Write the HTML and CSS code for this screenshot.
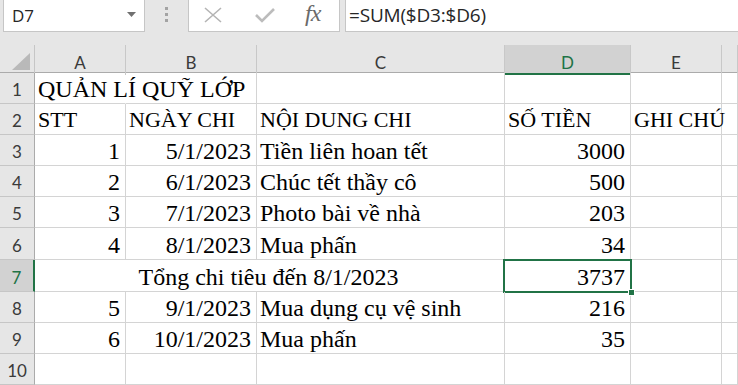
FILE: index.html
```html
<!DOCTYPE html>
<html lang="vi">
<head>
<meta charset="utf-8">
<title>Excel</title>
<link rel="stylesheet" href="styles.css">
</head>
<body>
<div class="fbar">
  <div class="namebox">
    <span>D7</span>
    <svg class="dd" width="9" height="5" viewBox="0 0 9 5"><path d="M0 0H9L4.5 5Z" fill="#707070"/></svg>
  </div>
  <div class="grip"><i></i><i></i><i></i></div>
  <div class="fbtns">
    <svg class="ico-x" width="20" height="16" viewBox="0 0 20 16"><path d="M2 1L18 15M18 1L2 15" stroke="#b4b4b4" stroke-width="1.6" fill="none"/></svg>
    <svg class="ico-ok" width="20" height="16" viewBox="0 0 20 16"><path d="M1 8L7 14L19 2" stroke="#bcbcbc" stroke-width="2.6" fill="none"/></svg>
    <span class="fx">fx</span>
  </div>
  <div class="finput">=SUM($D3:$D6)</div>
</div>

<div class="sheet">
  <div class="row hrow">
    <div class="corner"><svg width="18" height="17" viewBox="0 0 18 17"><path d="M0 17H18V0Z" fill="#b9b9b9"/></svg></div>
    <div class="ch">A</div>
    <div class="ch">B</div>
    <div class="ch">C</div>
    <div class="ch sel">D</div>
    <div class="ch">E</div>
    <div class="ch"></div>
  </div>

  <div class="row">
    <div class="rh">1</div>
    <div class="c noright">QUẢN LÍ QUỸ LỚP</div>
    <div class="c"></div>
    <div class="c"></div>
    <div class="c"></div>
    <div class="c"></div>
    <div class="c"></div>
  </div>

  <div class="row small">
    <div class="rh">2</div>
    <div class="c">STT</div>
    <div class="c">NGÀY CHI</div>
    <div class="c">NỘI DUNG CHI</div>
    <div class="c">SỐ TIỀN</div>
    <div class="c">GHI CHÚ</div>
    <div class="c"></div>
  </div>

  <div class="row">
    <div class="rh">3</div>
    <div class="c num">1</div>
    <div class="c num">5/1/2023</div>
    <div class="c">Tiền liên hoan tết</div>
    <div class="c num">3000</div>
    <div class="c"></div>
    <div class="c"></div>
  </div>

  <div class="row">
    <div class="rh">4</div>
    <div class="c num">2</div>
    <div class="c num">6/1/2023</div>
    <div class="c">Chúc tết thầy cô</div>
    <div class="c num">500</div>
    <div class="c"></div>
    <div class="c"></div>
  </div>

  <div class="row">
    <div class="rh">5</div>
    <div class="c num">3</div>
    <div class="c num">7/1/2023</div>
    <div class="c">Photo bài về nhà</div>
    <div class="c num">203</div>
    <div class="c"></div>
    <div class="c"></div>
  </div>

  <div class="row tall">
    <div class="rh">6</div>
    <div class="c num">4</div>
    <div class="c num">8/1/2023</div>
    <div class="c">Mua phấn</div>
    <div class="c num">34</div>
    <div class="c"></div>
    <div class="c"></div>
  </div>

  <div class="row tall">
    <div class="rh sel">7</div>
    <div class="c center merge3">Tổng chi tiêu đến 8/1/2023</div>
    <div class="c num active">3737<span class="handle"></span></div>
    <div class="c"></div>
    <div class="c"></div>
  </div>

  <div class="row">
    <div class="rh">8</div>
    <div class="c num">5</div>
    <div class="c num">9/1/2023</div>
    <div class="c">Mua dụng cụ vệ sinh</div>
    <div class="c num">216</div>
    <div class="c"></div>
    <div class="c"></div>
  </div>

  <div class="row">
    <div class="rh">9</div>
    <div class="c num">6</div>
    <div class="c num">10/1/2023</div>
    <div class="c">Mua phấn</div>
    <div class="c num">35</div>
    <div class="c"></div>
    <div class="c"></div>
  </div>

  <div class="row">
    <div class="rh">10</div>
    <div class="c"></div>
    <div class="c"></div>
    <div class="c"></div>
    <div class="c"></div>
    <div class="c"></div>
    <div class="c"></div>
  </div>
</div>
</body>
</html>
```

FILE: styles.css
```css
* { box-sizing: border-box; margin: 0; padding: 0; }
html, body { width: 738px; height: 385px; overflow: hidden; }
body { background: #e6e6e6; font-family: "Liberation Serif", "Times New Roman", serif; }

/* formula bar */
.fbar { display: flex; height: 32px; }
.namebox {
  margin-left: 3px; width: 142px; background: #fff;
  border: 1px solid #c6c6c6; border-top: 0;
  display: flex; align-items: center; justify-content: space-between;
  padding: 0 8px 0 8px;
  font-family: "Open Sans", sans-serif; font-size: 17px; color: #262626;
}
.namebox span { margin-top: -1px; }
.dd { margin-top: -2px; }
.grip { width: 43px; display: flex; flex-direction: column; align-items: center; justify-content: center; gap: 3px; padding-bottom: 3px; }
.grip i { display: block; width: 3px; height: 3px; background: #a3a3a3; }
.fbtns {
  width: 152px; background: #fff; border: 1px solid #c6c6c6; border-top: 0;
  display: flex; align-items: center; padding-left: 14px; padding-bottom: 2px;
}
.ico-x { margin-right: 32px; }
.ico-ok { margin-right: 30px; }
.fx { font-family: "Liberation Serif", serif; font-style: italic; font-size: 24px; color: #6a6a6a; margin-top: -3px; letter-spacing: -1px; }
.finput {
  flex: 1; margin-left: 5px; background: #fff; border: 1px solid #c6c6c6; border-top: 0; border-right: 0;
  font-family: "Open Sans", sans-serif; font-size: 19px; color: #262626;
  display: flex; align-items: center; padding-left: 3px; padding-bottom: 2px; letter-spacing: -0.2px;
}

/* sheet */
.sheet { margin-top: 13px; background: #fff; }
.row { display: grid; grid-template-columns: 35px 91px 131px 248px 126px 91px 1fr; height: 31px; }
.row.tall { height: 32px; }
.row.hrow { height: 28px; background: #e6e6e6; border-bottom: 1px solid #ababab; }

.corner { display: flex; align-items: flex-end; justify-content: flex-end; padding: 0 4px 5px 0; border-right: 1px solid #c6c6c6; }
.ch {
  display: flex; align-items: center; justify-content: center; padding-top: 5px;
  font-family: Lato, "Open Sans", sans-serif; font-size: 17px; color: #3a3a3a;
  border-right: 1px solid #c8c8c8;
}
.ch.sel { background: #d2d2d2; color: #217346; border-bottom: 2px solid #217346; padding-top: 7px; }

.rh {
  display: flex; align-items: center; justify-content: center; padding-top: 3px;
  background: #e6e6e6; font-family: Lato, "Open Sans", sans-serif; font-size: 17px; color: #3a3a3a;
  border-right: 1px solid #ababab; border-bottom: 1px solid #c6c6c6;
}
.rh.sel { background: #d2d2d2; color: #217346; border-right: 2px solid #217346; }

.c {
  display: flex; align-items: flex-end; white-space: nowrap;
  padding: 0 5px 0 3px; font-size: 24px; line-height: normal; color: #000;
  border-right: 1px solid #d4d4d4; border-bottom: 1px solid #d4d4d4;
  position: relative;
}
.row.small .c { font-size: 22px; padding-bottom: 1px; }
.c.num { justify-content: flex-end; }
.c.center { justify-content: center; }
.c.noright { border-right-color: transparent; overflow: visible; z-index: 1; }
.c.merge3 { grid-column: span 3; }

.c.active::after {
  content: ""; position: absolute; left: -2px; top: -1px; right: -2px; bottom: -2px;
  border: 2px solid #217346; pointer-events: none;
}
.handle {
  position: absolute; right: -5px; bottom: -5px; width: 7px; height: 7px;
  background: #217346; border: 1px solid #fff; z-index: 2;
}
```
